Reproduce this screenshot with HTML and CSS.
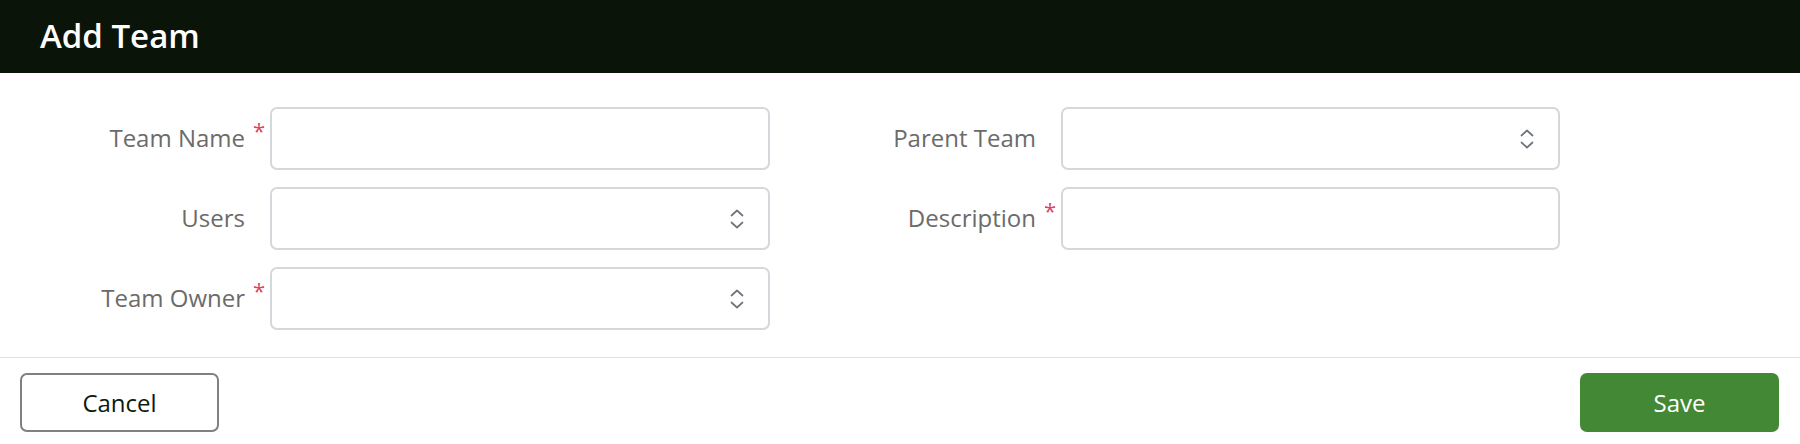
FILE: index.html
```html
<!DOCTYPE html>
<html lang="en">
<head>
    <meta charset="UTF-8">
    <meta name="viewport" content="width=device-width, initial-scale=1.0">
    <title>Add Team</title>
    <link rel="stylesheet" href="styles.css">
</head>
<body>
    <div class="modal">
        <div class="modal-header">
            <h1>Add Team</h1>
        </div>

        <!-- form fields, two columns -->
        <div class="modal-body">
            <div class="fields">
                <label class="label">Team Name<span class="req">*</span></label>
                <input class="field" type="text">

                <label class="label">Parent Team<span class="req"></span></label>
                <div class="field select">
                    <svg width="14" height="22" viewBox="0 0 14 22"><path d="M1.5 7.5 L7 2.5 L12.5 7.5 M1.5 14.5 L7 19.5 L12.5 14.5" fill="none" stroke="#6e747c" stroke-width="1.7" stroke-linecap="round" stroke-linejoin="round"/></svg>
                </div>

                <label class="label">Users<span class="req"></span></label>
                <div class="field select">
                    <svg width="14" height="22" viewBox="0 0 14 22"><path d="M1.5 7.5 L7 2.5 L12.5 7.5 M1.5 14.5 L7 19.5 L12.5 14.5" fill="none" stroke="#6e747c" stroke-width="1.7" stroke-linecap="round" stroke-linejoin="round"/></svg>
                </div>

                <label class="label">Description<span class="req">*</span></label>
                <input class="field" type="text">

                <label class="label">Team Owner<span class="req">*</span></label>
                <div class="field select">
                    <svg width="14" height="22" viewBox="0 0 14 22"><path d="M1.5 7.5 L7 2.5 L12.5 7.5 M1.5 14.5 L7 19.5 L12.5 14.5" fill="none" stroke="#6e747c" stroke-width="1.7" stroke-linecap="round" stroke-linejoin="round"/></svg>
                </div>
            </div>
        </div>

        <div class="modal-footer">
            <button class="btn btn-cancel">Cancel</button>
            <button class="btn btn-save">Save</button>
        </div>
    </div>
</body>
</html>
```

FILE: styles.css
```css
body {
    margin: 0;
    padding: 0;
    font-family: 'Open Sans', 'Liberation Sans', sans-serif;
    background: #fff;
}

.modal {
    width: 1800px;
    height: 444px;
    display: flex;
    flex-direction: column;
}

.modal-header {
    height: 73px;
    background-color: #0a1408;
    display: flex;
    align-items: center;
    padding-left: 40px;
}

.modal-header h1 {
    margin: 0;
    color: #fff;
    font-size: 33px;
    font-weight: 600;
    line-height: 1;
    padding-bottom: 2px;
}

.modal-body {
    padding: 34px 0 27px 0;
}

.fields {
    display: grid;
    grid-template-columns: 270px 500px 291px 499px;
    grid-auto-rows: 63px;
    row-gap: 17px;
}

.label {
    display: flex;
    align-items: center;
    justify-content: flex-end;
    padding-right: 5px;
    font-size: 24px;
    color: #6b6b6b;
    padding-bottom: 2px;
}

.req {
    display: inline-block;
    width: 20px;
    text-align: right;
    color: #e0435e;
    font-size: 22px;
    align-self: flex-start;
    margin-top: 12px;
    line-height: 1;
}

.field {
    box-sizing: border-box;
    width: 100%;
    height: 63px;
    border: 2px solid #d4d7dc;
    border-radius: 7px;
    background: #fff;
    margin: 0;
    font-family: inherit;
    font-size: 22px;
    outline: none;
}

.select {
    display: flex;
    align-items: center;
    justify-content: flex-end;
    padding-right: 24px;
}

.modal-footer {
    border-top: 1px solid #dedee4;
    padding: 15px 21px 0 20px;
    display: flex;
    justify-content: space-between;
}

.btn {
    width: 199px;
    height: 59px;
    border-radius: 7px;
    font-family: inherit;
    font-size: 24px;
    cursor: pointer;
}

.btn-cancel {
    background: #fff;
    color: #0d1a0d;
    border: 2px solid #7d827d;
}

.btn-save {
    background: #438935;
    color: #fff;
    border: none;
}
```
